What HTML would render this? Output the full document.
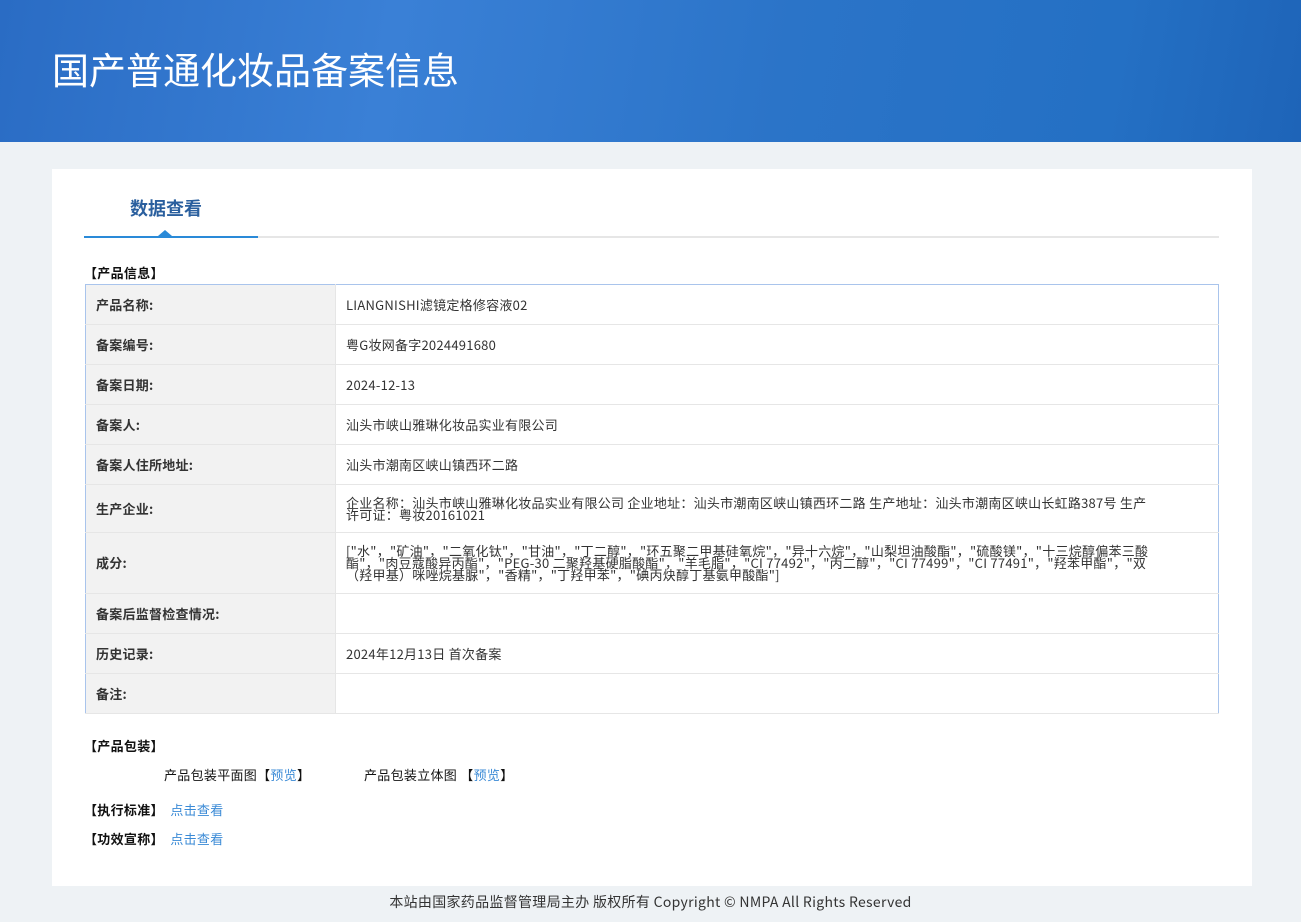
<!DOCTYPE html>
<html><head><meta charset="utf-8"><style>
body{margin:0;width:1301px;height:922px;background:#eef2f5;font-family:"Liberation Sans","Noto Sans CJK SC",sans-serif;color:#333;position:relative;overflow:hidden}
.hd{position:absolute;left:0;top:0;width:1301px;height:142px;background:linear-gradient(100deg,#2a6cc4 0%,#3a80d6 30%,#2b74c8 60%,#2470c4 85%,#1e64b8 100%)}
.hd h1{position:absolute;left:52px;top:45px;margin:0;font-size:37px;font-weight:normal;color:#fff;font-family:"Noto Sans CJK SC",sans-serif;line-height:46px}
.card{position:absolute;left:52px;top:169px;width:1200px;height:717px;background:#fff}
.tab{position:absolute;left:78px;top:26px;font-size:18px;font-weight:bold;color:#2a5f9e;font-family:"Noto Sans CJK SC",sans-serif}
.ln{position:absolute;left:32px;top:67px;width:1135px;height:2px;background:#e6e6e6}
.ln b{position:absolute;left:0;top:0;width:174px;height:2px;background:#2a8ad8}
.tri{position:absolute;left:106px;top:61px;width:0;height:0;border-left:7px solid transparent;border-right:7px solid transparent;border-bottom:6px solid #2a8ad8}
.sec{position:absolute;font-size:13px;font-weight:bold;color:#111;font-family:"Noto Sans CJK SC",sans-serif;letter-spacing:0.3px}
table{position:absolute;left:33px;top:115px;width:1134px;border-collapse:collapse;border:1px solid #a9c4ec;font-size:13px;font-family:"Noto Sans CJK SC",sans-serif;letter-spacing:0.25px}
td{border-bottom:1px solid #e6e6e6;padding:0 10px;vertical-align:middle;line-height:12px}
td.l{width:229px;background:#f2f2f2;font-weight:bold;color:#333;border-right:1px solid #e6e6e6}
td.v{padding-right:60px}
.lk{color:#3a8ad6;font-weight:normal}
.ft{position:absolute;top:892px;width:1301px;text-align:center;font-size:14px;color:#333;font-family:"Noto Sans CJK SC",sans-serif;letter-spacing:0.3px}
.t{position:absolute;font-size:13px;font-family:"Noto Sans CJK SC",sans-serif;color:#111;letter-spacing:0.3px}
</style></head><body>
<div class="hd"><h1>国产普通化妆品备案信息</h1></div>
<div class="card">
<div class="tab">数据查看</div>
<div class="ln"><b></b></div><div class="tri"></div>
<div class="sec" style="left:32px;top:94px">【产品信息】</div>
<table>
<tr style="height:40px"><td class="l">产品名称:</td><td class="v">LIANGNISHI滤镜定格修容液02</td></tr>
<tr style="height:40px"><td class="l">备案编号:</td><td class="v">粤G妆网备字2024491680</td></tr>
<tr style="height:40px"><td class="l">备案日期:</td><td class="v">2024-12-13</td></tr>
<tr style="height:40px"><td class="l">备案人:</td><td class="v">汕头市峡山雅琳化妆品实业有限公司</td></tr>
<tr style="height:40px"><td class="l">备案人住所地址:</td><td class="v">汕头市潮南区峡山镇西环二路</td></tr>
<tr style="height:48px"><td class="l">生产企业:</td><td class="v">企业名称：汕头市峡山雅琳化妆品实业有限公司 企业地址：汕头市潮南区峡山镇西环二路 生产地址：汕头市潮南区峡山长虹路387号 生产许可证：粤妆20161021</td></tr>
<tr style="height:61px"><td class="l">成分:</td><td class="v">["水"，"矿油"，"二氧化钛"，"甘油"，"丁二醇"，"环五聚二甲基硅氧烷"，"异十六烷"，"山梨坦油酸酯"，"硫酸镁"，"十三烷醇偏苯三酸酯"，"肉豆蔻酸异丙酯"，"PEG-30 二聚羟基硬脂酸酯"，"羊毛脂"，"CI 77492"，"丙二醇"，"CI 77499"，"CI 77491"，"羟苯甲酯"，"双（羟甲基）咪唑烷基脲"，"香精"，"丁羟甲苯"，"碘丙炔醇丁基氨甲酸酯"]</td></tr>
<tr style="height:40px"><td class="l">备案后监督检查情况:</td><td class="v"></td></tr>
<tr style="height:40px"><td class="l">历史记录:</td><td class="v">2024年12月13日 首次备案</td></tr>
<tr style="height:40px"><td class="l">备注:</td><td class="v"></td></tr>
</table>
<div class="sec" style="left:32px;top:567px">【产品包装】</div>
<div class="t" style="left:112px;top:596px">产品包装平面图【<span class="lk">预览</span>】</div>
<div class="t" style="left:312px;top:596px">产品包装立体图 【<span class="lk">预览</span>】</div>
<div class="sec" style="left:32px;top:631px">【执行标准】&nbsp;&nbsp;<span class="lk">点击查看</span></div>
<div class="sec" style="left:32px;top:660px">【功效宣称】&nbsp;&nbsp;<span class="lk">点击查看</span></div>
</div>
<div class="ft">本站由国家药品监督管理局主办 版权所有 Copyright © NMPA All Rights Reserved</div>
</body></html>
